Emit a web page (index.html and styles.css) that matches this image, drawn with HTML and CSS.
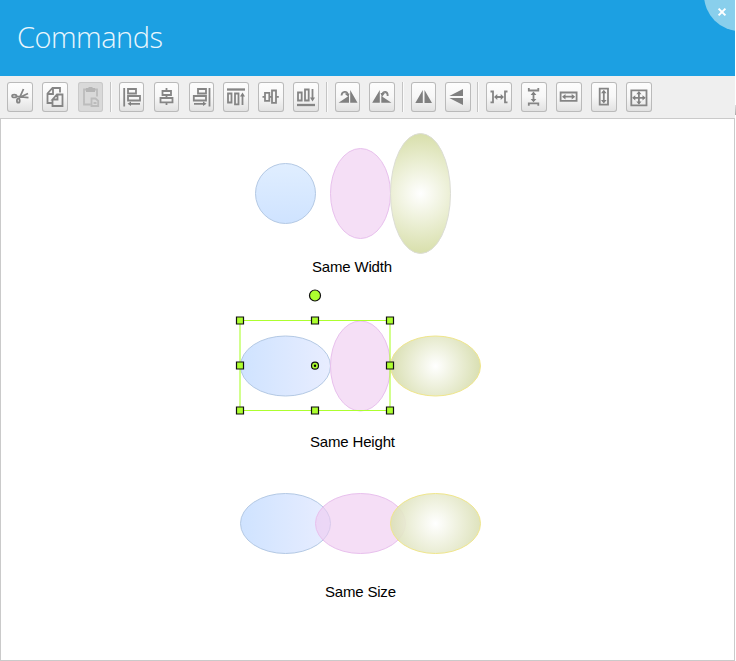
FILE: index.html
```html
<!DOCTYPE html>
<html lang="en">
<head>
<meta charset="utf-8">
<title>Commands</title>
<link rel="stylesheet" href="styles.css">
</head>
<body>
<header class="header">
  <h1 class="title">Commands</h1>
  <button class="close" aria-label="Close"><svg width="10" height="10" viewBox="0 0 10 10"><path d="M1.6 1.6L8.4 8.4M8.4 1.6L1.6 8.4"/></svg></button>
</header>
<nav class="toolbar">
  <div class="group clipboard">
    <button class="tool" aria-label="Cut"><svg viewBox="0 0 26 30"><path class="line" d="M9 14.4L21.5 15.6M12 17L16.5 7M12.5 15.5L21 11.5"/><ellipse class="line" cx="7.3" cy="14" rx="2.2" ry="1.4"/><ellipse class="line" cx="11.3" cy="18.7" rx="1.4" ry="2"/></svg></button>
    <button class="tool" aria-label="Copy"><svg viewBox="0 0 26 30"><path class="line" d="M10.5 21H5.5V11.5L10.5 6H18V10.5M6 12H11V6.5M10.5 17.5V24H20.5V12.5H15L10.5 17.5H15.5V13"/></svg></button>
    <button class="tool disabled" aria-label="Paste"><svg viewBox="0 0 26 30"><path class="line" d="M9 7.5H6V22.5H12.5M16 7.5H19V14.5M13.5 16.5H17.5L20.2 19V24H13.5ZM15.5 21H18.5"/><path class="fill" d="M8 6H10.5V5H14.5V6H17V10H8Z"/></svg></button>
  </div>
  <div class="group align">
    <button class="tool" aria-label="Align left"><svg viewBox="0 0 26 30"><path class="line" d="M5.2 6V24.5M9 7H17V11.5H9ZM9 14H21V18.5H9ZM11 21.8H21"/><path class="fill" d="M8.5 21.8L12 19.6V24Z"/></svg></button>
    <button class="tool" aria-label="Align center"><svg viewBox="0 0 26 30"><path class="line" d="M12.5 6V9M8.5 9H17V13H8.5ZM12.5 13V16M6.5 16H18.5V20.3H6.5ZM12.5 20.3V23"/></svg></button>
    <button class="tool" aria-label="Align right"><svg viewBox="0 0 26 30"><path class="line" d="M20.5 6V24.5M9 7H17V11.5H9ZM4.8 14H17V18.5H4.8ZM5 21.8H15"/><path class="fill" d="M17.5 21.8L14 19.6V24Z"/></svg></button>
    <button class="tool" aria-label="Align top"><svg viewBox="0 0 26 30"><path class="line heavy" d="M4 7.5H22"/><path class="line" d="M5 11.5H8.5V20.5H5ZM12 11.5H15.5V22.3H12ZM19.5 13V23"/><path class="fill" d="M19.5 10.5L17 14.5H22Z"/></svg></button>
    <button class="tool" aria-label="Align middle"><svg viewBox="0 0 26 30"><path class="line" d="M4.5 14.8H7M7 10.8H11.3V18.8H7ZM11.3 14.8H14M14 8.5H18V20.8H14ZM18 14.8H20.8"/></svg></button>
    <button class="tool" aria-label="Align bottom"><svg viewBox="0 0 26 30"><path class="line heavy" d="M4 23H22"/><path class="line" d="M5 10.5H8.7V18.5H5ZM12 7.5H15.7V18.5H12ZM19.5 7V17"/><path class="fill" d="M19.5 19.5L17 15.5H22Z"/></svg></button>
  </div>
  <div class="group rotate">
    <button class="tool" aria-label="Rotate right"><svg viewBox="0 0 26 30"><path class="fill" d="M3.5 20.8L14 13.7V20.8ZM15.2 8L22.5 20.8H15.2Z"/><path class="line" d="M6.5 13.5C7 9 12 9 12.5 12"/><path class="fill" d="M9.5 11.5H14.5L13.5 15Z"/></svg></button>
    <button class="tool" aria-label="Rotate left"><svg viewBox="0 0 26 30"><path class="fill" d="M3.2 20.8L10.8 8V20.8ZM12.3 14L22.5 20.8H12.3Z"/><path class="line" d="M18.7 14C19 9 14 9 13.5 12"/><path class="fill" d="M11.5 11H16L13 15Z"/></svg></button>
  </div>
  <div class="group flip">
    <button class="tool" aria-label="Flip horizontal"><svg viewBox="0 0 26 30"><path class="fill" d="M4.3 21L11.8 8V21ZM13.5 8L21 21H13.5Z"/></svg></button>
    <button class="tool" aria-label="Flip vertical"><svg viewBox="0 0 26 30"><path class="fill" d="M18 7V14H4.3ZM4.3 16H18V23Z"/></svg></button>
  </div>
  <div class="group size">
    <button class="tool" aria-label="Space across"><svg viewBox="0 0 26 30"><path class="line" d="M4.5 9.5H7V20.3H4.5M21.5 9.5H19V20.3H21.5M9.5 15H16.5"/><path class="fill" d="M8 15L11.3 12V18ZM18 15L14.7 12V18Z"/></svg></button>
    <button class="tool" aria-label="Space down"><svg viewBox="0 0 26 30"><path class="line" d="M7.8 6V8.5H17.3V6M7.8 23.7V21.3H17.3V23.7M12.5 11V19"/><path class="fill" d="M12.5 9.5L9.6 13H15.4ZM12.5 20.3L9.6 17H15.4Z"/></svg></button>
    <button class="tool" aria-label="Same width"><svg viewBox="0 0 26 30"><path class="line" d="M4.6 10.5H20.6V18.8H4.6ZM8 14.7H17.5"/><path class="fill" d="M6 14.7L9.5 11.9V17.5ZM19.2 14.7L15.7 11.9V17.5Z"/></svg></button>
    <button class="tool" aria-label="Same height"><svg viewBox="0 0 26 30"><path class="line" d="M8.7 6.6H17V22.7H8.7ZM12.8 9V20"/><path class="fill" d="M12.8 7.7L10 11.2H15.6ZM12.8 21.5L10 18H15.6Z"/></svg></button>
    <button class="tool" aria-label="Same size"><svg viewBox="0 0 26 30"><path class="line" d="M5.3 8.3H20.5V23.3H5.3ZM12.9 10.5V21.5M7.5 15.8H18.5"/><path class="fill" d="M12.9 9L10.3 12.2H15.5ZM12.9 22.6L10.3 19.4H15.5ZM6.1 15.8L9.3 13.2V18.4ZM19.7 15.8L16.5 13.2V18.4Z"/></svg></button>
  </div>
  <i class="edge"></i>
</nav>
<main class="canvas">
  <svg class="drawing" width="734" height="541" viewBox="1 119 734 541">
    <defs>
      <linearGradient id="sky" x2="0" y2="1"><stop stop-color="#e0eeff"/><stop offset="1" stop-color="#cfe3ff"/></linearGradient>
      <linearGradient id="blue"><stop stop-color="#cfe3ff"/><stop offset="1" stop-color="#e8edff"/></linearGradient>
      <radialGradient id="olive" gradientUnits="userSpaceOnUse" cx="420.5" cy="193.5" r="60"><stop stop-color="#fff"/><stop offset="1" stop-color="#d8dfab"/></radialGradient>
      <radialGradient id="sage" gradientUnits="userSpaceOnUse" cx="435.5" cy="366" r="45"><stop stop-color="#fff"/><stop offset="1" stop-color="#d9dfb2"/></radialGradient>
      <radialGradient id="pale" gradientUnits="userSpaceOnUse" cx="435.5" cy="523.5" r="45"><stop stop-color="#fff"/><stop offset="1" stop-color="#dbe0b6"/></radialGradient>
    </defs>
    <circle cx="285.5" cy="193.5" r="30" fill="url(#sky)" stroke="#b4c9e4"/>
    <ellipse cx="360.5" cy="193.5" rx="30" ry="45" fill="#f5dff6" stroke="#e8c0ed"/>
    <ellipse cx="420.5" cy="193.5" rx="30" ry="60" fill="url(#olive)" stroke="#dcddd5"/>
    <text x="312" y="272" textLength="80">Same Width</text>

    <ellipse cx="285.5" cy="366" rx="45" ry="30" fill="url(#blue)" stroke="#b4c9e4"/>
    <ellipse cx="360.5" cy="366" rx="30" ry="45" fill="#f5dff6" stroke="#e8c0ed"/>
    <ellipse cx="435.5" cy="366" rx="45" ry="30" fill="url(#sage)" stroke="#f0e68c"/>
    <g class="selection">
      <path class="side" d="M240 320.5V410.5M390 320.5V410.5"/>
      <path class="frame" d="M240 320.5H390M240 410.5H390"/>
      <path class="handle" d="M236.5 317h7v7h-7ZM311.5 317h7v7h-7ZM386.5 317h7v7h-7ZM236.5 362h7v7h-7ZM386.5 362h7v7h-7ZM236.5 407h7v7h-7ZM311.5 407h7v7h-7ZM386.5 407h7v7h-7Z"/>
      <circle class="handle" cx="315" cy="295.5" r="5.5"/>
      <circle class="handle" cx="315" cy="365.7" r="3.5"/>
      <circle cx="315" cy="365.7" r="1.2"/>
    </g>
    <text x="310" y="447" textLength="85">Same Height</text>

    <ellipse cx="285.5" cy="523.5" rx="45" ry="30" fill="url(#blue)" stroke="#b4c9e4"/>
    <ellipse cx="360.5" cy="523.5" rx="45" ry="30" fill="#efcaf1" fill-opacity=".62" stroke="#e8c0ed"/>
    <ellipse cx="435.5" cy="523.5" rx="45" ry="30" fill="url(#pale)" fill-opacity=".9" stroke="#f0e68c"/>
    <text x="325" y="597" textLength="71">Same Size</text>
  </svg>
</main>
</body>
</html>
```

FILE: styles.css
```css
* { box-sizing: border-box; }
body {
  margin: 0;
  width: 736px;
  height: 661px;
  overflow: hidden;
  display: flex;
  flex-direction: column;
  background: #fff;
  font-family: "Liberation Sans", Arial, sans-serif;
}
button { padding: 0; border: 0; }
.header {
  position: relative;
  width: 735px;
  height: 76px;
  flex: none;
  padding: 16px 17px;
  overflow: hidden;
  background: #1ca0e2;
}
.title {
  margin: 0;
  color: #e9f6fd;
  font: 300 29px/42px "Open Sans", sans-serif;
  letter-spacing: -.5px;
}
.close {
  position: absolute;
  top: -41px;
  right: -41px;
  width: 72px;
  height: 72px;
  border-radius: 50%;
  background: #89cfec;
}
.close svg {
  position: absolute;
  left: 13px;
  bottom: 14px;
  fill: none;
  stroke: #fff;
  stroke-width: 2;
}
.toolbar {
  position: relative;
  width: 735px;
  height: 42px;
  flex: none;
  display: flex;
  align-items: flex-start;
  padding: 6px 0 0 7px;
  background: #efefef;
}
.group { display: flex; }
.group + .group {
  padding-left: 8px;
  border-left: 1px solid #c4c4c4;
  box-shadow: inset 1px 0 #fafafa;
}
.clipboard { gap: 9.8px; }
.align { margin-left: 6.7px; gap: 9.4px; }
.rotate { margin-left: 7.2px; gap: 9px; }
.flip { margin-left: 6.8px; gap: 9px; }
.size { margin-left: 6.6px; gap: 9.5px; }
.tool {
  width: 25.5px;
  height: 30px;
  flex: none;
  border-radius: 3px;
  background: linear-gradient(#fdfdfd, #f7f7f7 50%, #e0e0e0);
  box-shadow: inset 0 0 0 1px #bababa;
}
.tool svg { display: block; width: 26px; height: 30px; }
.tool .line { fill: none; stroke: #858585; stroke-width: 1.8; }
.tool .line.heavy { stroke-width: 2.3; }
.tool .fill { fill: #808080; }
.tool.disabled { background: #d9d9d9; box-shadow: inset 0 0 0 1px #c9c9c9; }
.disabled .line { stroke: #bcbcbc; }
.disabled .fill { fill: #b5b5b5; }
.edge {
  position: absolute;
  right: -1px;
  bottom: 3px;
  width: 1px;
  height: 10px;
  background: linear-gradient(#ddd, #aaa);
}
.canvas {
  width: 735px;
  height: 543px;
  flex: none;
  border: 1px solid #cacaca;
}
.drawing { display: block; }
.drawing text { font-size: 15px; }
.selection .side { stroke: #adff2f; stroke-opacity: .55; stroke-width: 2; }
.selection .frame { stroke: #adff2f; }
.selection .handle { fill: #adff2f; stroke: #111; stroke-width: 1.2; }
```
